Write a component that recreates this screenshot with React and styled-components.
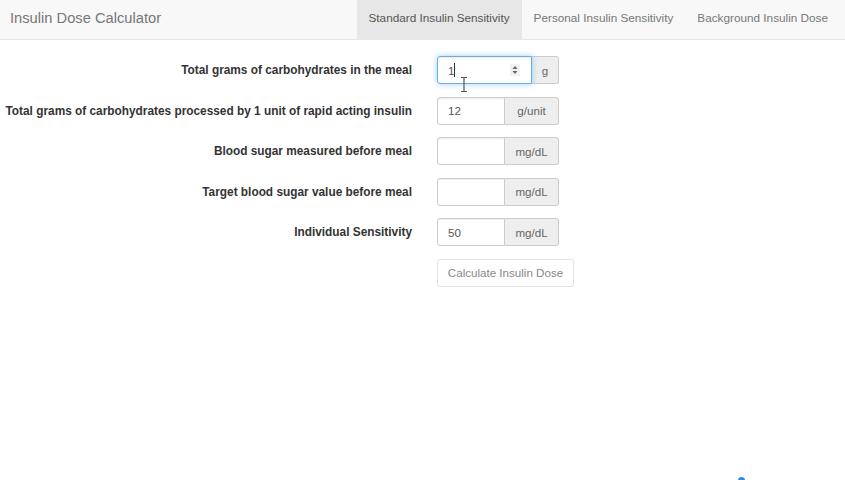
import React from "react";
import styled, { createGlobalStyle } from "styled-components";

const Global = createGlobalStyle`
  html, body { margin: 0; padding: 0; background: #fff; }
  body {
    font-family: "Liberation Sans", Arial, sans-serif;
    font-size: 11.6px;
    color: #333;
    width: 845px;
    height: 480px;
    overflow: hidden;
    position: relative;
  }
  * { box-sizing: border-box; }
`;

const Navbar = styled.nav`
  height: 40px;
  background: #f8f8f8;
  border-bottom: 1px solid #e7e7e7;
  display: flex;
  align-items: stretch;
  justify-content: space-between;
`;

const Brand = styled.div`
  display: flex;
  align-items: center;
  padding: 0 10px 4px;
  font-size: 14.7px;
  color: #777;
`;

const Tabs = styled.ul`
  display: flex;
  margin: 0;
  padding: 0 5px 0 0;
  list-style: none;
`;

const Tab = styled.li`
  display: flex;
  align-items: center;
  padding: 0 12px 4px;
  font-size: 11.75px;
  color: ${(p) => (p.$active ? "#555" : "#777")};
  background: ${(p) => (p.$active ? "#e7e7e7" : "transparent")};
`;

const Form = styled.form`
  padding-top: 16px;
  display: grid;
  grid-template-columns: 412px 122px;
  column-gap: 25px;
  row-gap: 12.5px;
  align-items: center;
`;

const Label = styled.label`
  text-align: right;
  font-weight: bold;
  font-size: 11.85px;
  white-space: nowrap;
`;

const Group = styled.div`
  position: relative;
  display: flex;
  height: 28px;
`;

const Input = styled.input`
  flex: 1;
  min-width: 0;
  height: 28px;
  padding: 0 10px;
  font: inherit;
  color: #555;
  border: 1px solid ${(p) => (p.$focus ? "#66afe9" : "#ccc")};
  border-radius: 3px 0 0 3px;
  outline: none;
  box-shadow: ${(p) =>
    p.$focus
      ? "inset 0 1px 1px rgba(0,0,0,.075), 0 0 6px rgba(102,175,233,.6)"
      : "inset 0 1px 1px rgba(0,0,0,.075)"};
  position: relative;
  z-index: ${(p) => (p.$focus ? 1 : 0)};
`;

const Addon = styled.span`
  display: flex;
  align-items: center;
  justify-content: center;
  width: ${(p) => p.$w}px;
  background: #eee;
  color: #666;
  border: 1px solid #ccc;
  border-left: none;
  border-radius: 0 3px 3px 0;
`;

const Caret = styled.span`
  position: absolute;
  left: 17px;
  top: 7px;
  width: 1px;
  height: 14px;
  background: #333;
  z-index: 2;
`;

const Spinner = styled.svg`
  position: absolute;
  left: 73px;
  top: 8px;
  z-index: 2;
`;

const Cursor = styled.svg`
  position: absolute;
  left: 23px;
  top: 21px;
  z-index: 3;
`;

const Button = styled.button`
  grid-column: 2;
  justify-self: start;
  width: 137px;
  height: 28px;
  padding: 0;
  font: inherit;
  color: #888;
  background: #fff;
  border: 1px solid #e3e3e3;
  border-radius: 3px;
`;

const Dot = styled.span`
  position: absolute;
  left: 738px;
  top: 477px;
  width: 7px;
  height: 7px;
  border-radius: 50%;
  background: #2b8ee8;
`;

const fields = [
  { label: "Total grams of carbohydrates in the meal", value: "1", unit: "g", w: 27, focus: true },
  { label: "Total grams of carbohydrates processed by 1 unit of rapid acting insulin", value: "12", unit: "g/unit", w: 54 },
  { label: "Blood sugar measured before meal", value: "", unit: "mg/dL", w: 54 },
  { label: "Target blood sugar value before meal", value: "", unit: "mg/dL", w: 54 },
  { label: "Individual Sensitivity", value: "50", unit: "mg/dL", w: 54 },
];

export default function App() {
  return (
    <>
      <Global />
      <Navbar>
        <Brand>Insulin Dose Calculator</Brand>
        <Tabs>
          <Tab $active>Standard Insulin Sensitivity</Tab>
          <Tab>Personal Insulin Sensitivity</Tab>
          <Tab>Background Insulin Dose</Tab>
        </Tabs>
      </Navbar>
      <Form onSubmit={(e) => e.preventDefault()}>
        {fields.map((f) => (
          <React.Fragment key={f.label}>
            <Label>{f.label}</Label>
            <Group>
              <Input type="text" defaultValue={f.value} $focus={f.focus} />
              <Addon $w={f.w}>{f.unit}</Addon>
              {f.focus && (
                <>
                  <Caret />
                  <Spinner width="10" height="12" viewBox="0 0 10 12">
                    <rect width="10" height="12" fill="#f1f1f1" />
                    <path d="M5 2 L7.5 5 L2.5 5 Z" fill="#666" />
                    <path d="M5 10 L7.5 7 L2.5 7 Z" fill="#666" />
                  </Spinner>
                  <Cursor width="8" height="15" viewBox="0 0 8 15">
                    <path d="M1 0.5 H7 M4 0.5 V14.5 M1 14.5 H7" stroke="#555" strokeWidth="1.2" fill="none" />
                  </Cursor>
                </>
              )}
            </Group>
          </React.Fragment>
        ))}
        <Button type="button">Calculate Insulin Dose</Button>
      </Form>
      <Dot />
    </>
  );
}
